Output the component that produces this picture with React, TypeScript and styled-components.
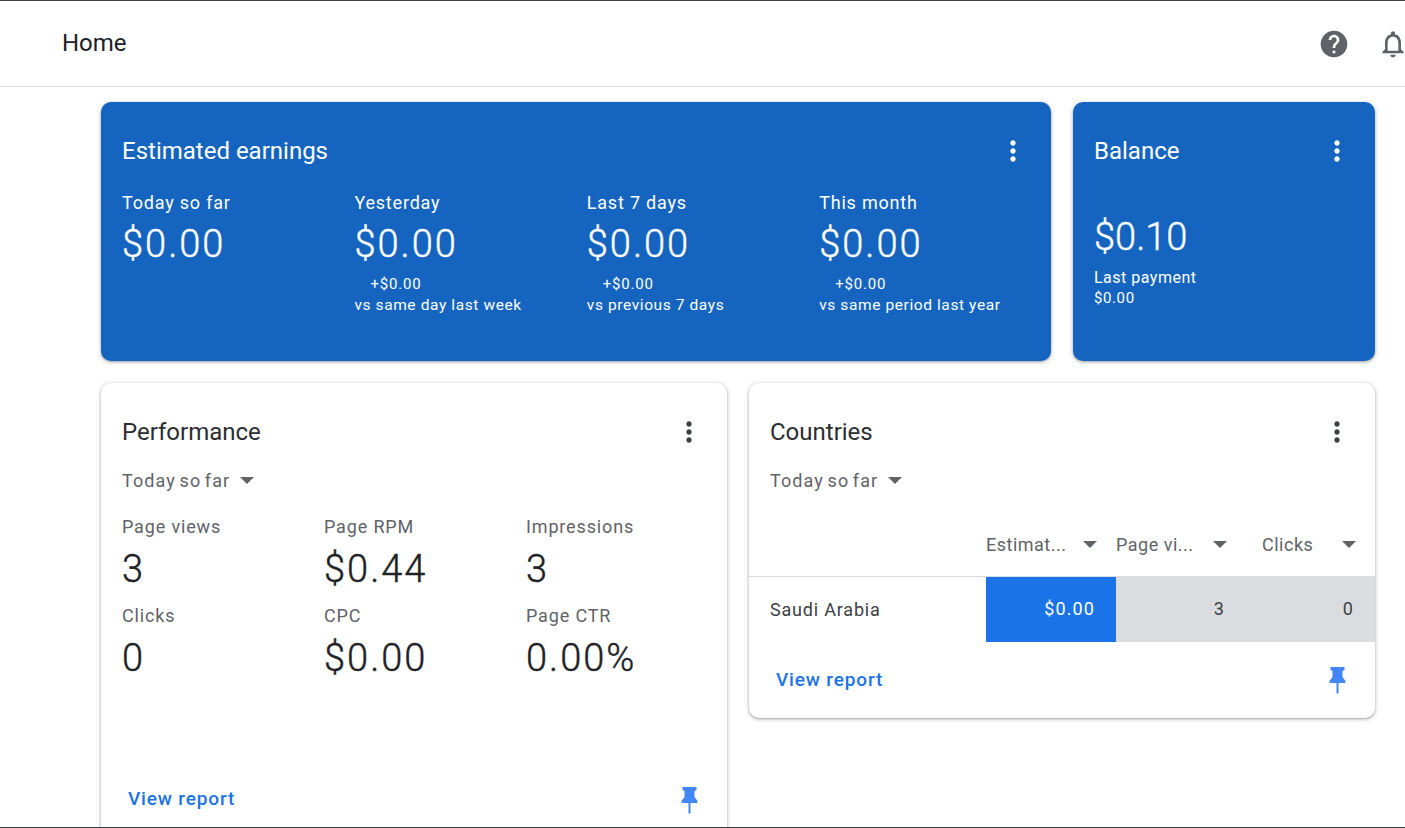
import React from "react";
import styled, { createGlobalStyle } from "styled-components";

const GlobalStyle = createGlobalStyle`
  html, body {
    margin: 0;
    padding: 0;
    background: #fff;
    font-family: Roboto, "Liberation Sans", sans-serif;
  }
`;

const Page = styled.div`
  height: 828px;
  overflow: hidden;
  box-sizing: border-box;
  border-top: 1px solid #3c4043;
  border-bottom: 1px solid #3c4043;
  display: flex;
  flex-direction: column;
`;

const Header = styled.header`
  height: 86px;
  flex-shrink: 0;
  box-sizing: border-box;
  border-bottom: 1px solid #dadce0;
  display: flex;
  align-items: center;
  justify-content: space-between;
  padding: 1px 0 0 62px;
  overflow: hidden;
`;

const PageTitle = styled.h1`
  margin: -2px 0 0;
  font-size: 24px;
  font-weight: 400;
  color: #202124;
`;

const HeaderIcons = styled.div`
  display: flex;
  align-items: center;
  gap: 27px;
  margin-right: -4px;
`;

const Main = styled.main`
  flex: 1;
  min-height: 0;
  padding: 15px 30px 0 101px;
  display: flex;
  flex-direction: column;
  gap: 22px;
`;

const TopRow = styled.div`
  display: grid;
  grid-template-columns: 950px 302px;
  gap: 22px;
`;

const BottomRow = styled.div`
  display: grid;
  grid-template-columns: 626px 626px;
  gap: 22px;
  align-items: start;
`;

const Card = styled.section<{ $blue?: boolean; $height: number }>`
  box-sizing: border-box;
  height: ${(p) => p.$height}px;
  border-radius: 10px;
  background: ${(p) => (p.$blue ? "#1565c0" : "#fff")};
  color: ${(p) => (p.$blue ? "#fff" : "#2b2d30")};
  box-shadow: 0 1px 2px rgba(60, 64, 67, 0.35), 0 1px 4px 1px rgba(60, 64, 67, 0.18);
  padding: 0 21px;
  position: relative;
  display: flex;
  flex-direction: column;
`;

const CardHead = styled.div`
  height: 98px;
  flex-shrink: 0;
  display: flex;
  align-items: center;
  justify-content: space-between;
`;

const CardTitle = styled.h2`
  margin: 0;
  font-size: 24px;
  font-weight: 400;
  color: inherit;
`;

const MoreButton = styled.span<{ $light?: boolean }>`
  width: 32px;
  height: 32px;
  margin-right: 1px;
  color: ${(p) => (p.$light ? "#fff" : "#3c4043")};
  display: flex;
`;

const EarningsGrid = styled.div`
  display: grid;
  grid-template-columns: repeat(4, 232.4px);
`;

const EarningLabel = styled.div`
  font-size: 18px;
  line-height: 22px;
  letter-spacing: 0.8px;
  margin-top: -8px;
`;

const EarningValue = styled.div`
  font-size: 38px;
  line-height: 46px;
  font-weight: 300;
  letter-spacing: 2px;
  -webkit-text-stroke: 0.4px currentColor;
  margin-top: 7px;
`;

const Delta = styled.div`
  font-size: 15px;
  line-height: 20px;
  letter-spacing: 0.8px;
  padding-left: 16px;
  margin-top: 7px;
`;

const Compare = styled.div`
  font-size: 15.5px;
  line-height: 20px;
  letter-spacing: 0.6px;
  margin-top: 1px;
`;

const BalanceValue = styled.div`
  font-size: 38px;
  line-height: 46px;
  font-weight: 300;
  -webkit-text-stroke: 0.4px currentColor;
  margin-top: 14px;
`;

const BalanceLabel = styled.div`
  font-size: 16px;
  line-height: 20px;
  letter-spacing: 0.5px;
  margin-top: 8px;
`;

const BalanceAmount = styled.div`
  font-size: 15px;
  line-height: 21px;
  letter-spacing: 0.6px;
`;

const RangePicker = styled.div`
  display: flex;
  align-items: center;
  gap: 10px;
  height: 24px;
  margin-top: -13px;
  font-size: 18px;
  letter-spacing: 1.1px;
  word-spacing: -2px;
  color: #5f6368;
`;

const Caret = styled.span`
  width: 0;
  height: 0;
  border-left: 7.5px solid transparent;
  border-right: 7.5px solid transparent;
  border-top: 7.5px solid #5f6368;
`;

const MetricsGrid = styled.div`
  display: grid;
  grid-template-columns: repeat(3, 202px);
  row-gap: 11.5px;
  margin-top: 23px;
`;

const MetricLabel = styled.div`
  font-size: 18px;
  line-height: 24px;
  letter-spacing: 0.85px;
  color: #5f6368;
`;

const MetricValue = styled.div`
  font-size: 38px;
  line-height: 46px;
  font-weight: 300;
  letter-spacing: 2px;
  -webkit-text-stroke: 0.4px currentColor;
  margin-top: 7px;
  color: #202124;
`;

const CardFoot = styled.div<{ $offset: number }>`
  margin-top: ${(p) => p.$offset}px;
  padding: 0 8px 0 6px;
  display: flex;
  align-items: center;
  justify-content: space-between;
`;

const ViewReport = styled.a`
  font-size: 19px;
  font-weight: 500;
  color: #1a73e8;
  text-decoration: none;
  letter-spacing: 0.85px;
`;

const PinSvg = styled.svg`
  margin-top: 3px;
`;

const TableHead = styled.div`
  display: grid;
  grid-template-columns: 237px 130px 130px 129px;
  margin: 18px -21px 0;
  height: 67px;
  padding-top: 3px;
  box-sizing: border-box;
  border-bottom: 1px solid #dadce0;
  align-items: center;
`;

const HeadCell = styled.div<{ $indent?: number }>`
  display: flex;
  align-items: center;
  justify-content: space-between;
  padding: 0 19px 0 ${(p) => p.$indent ?? 0}px;
  font-size: 18px;
  letter-spacing: 0.5px;
  color: #5f6368;
`;

const TableRow = styled.div`
  display: grid;
  grid-template-columns: 237px 130px 130px 129px;
  margin: 0 -21px;
  height: 65px;
`;

const CountryCell = styled.div`
  display: flex;
  align-items: center;
  padding: 0 0 1px 21px;
  font-size: 18px;
  letter-spacing: 0.8px;
  color: #3c4043;
`;

const NumberCell = styled.div<{ $primary?: boolean }>`
  display: flex;
  align-items: center;
  justify-content: flex-end;
  padding: 0 21px 3px 0;
  font-size: 18px;
  letter-spacing: 1.1px;
  background: ${(p) => (p.$primary ? "#1a73e8" : "#dadce0")};
  color: ${(p) => (p.$primary ? "#fff" : "#3c4043")};
`;

const MoreIcon = () => (
  <svg width="32" height="32" viewBox="0 0 24 24" fill="currentColor">
    <path d="M12 8c1.1 0 2-.9 2-2s-.9-2-2-2-2 .9-2 2 .9 2 2 2zm0 2c-1.1 0-2 .9-2 2s.9 2 2 2 2-.9 2-2-.9-2-2-2zm0 6c-1.1 0-2 .9-2 2s.9 2 2 2 2-.9 2-2-.9-2-2-2z" />
  </svg>
);

const PinIcon = () => (
  <PinSvg width="17" height="27" viewBox="0 0 17 27" fill="#4285f4">
    <path d="M1.5 0h14v3l-2 1v6l3 4v2H9.5v10.5h-2V16H.5v-2l3-4V4l-2-1z" />
  </PinSvg>
);

const earnings = [
  { label: "Today so far", value: "$0.00" },
  { label: "Yesterday", value: "$0.00", delta: "+$0.00", compare: "vs same day last week" },
  { label: "Last 7 days", value: "$0.00", delta: "+$0.00", compare: "vs previous 7 days" },
  { label: "This month", value: "$0.00", delta: "+$0.00", compare: "vs same period last year" },
];

const metrics = [
  { label: "Page views", value: "3" },
  { label: "Page RPM", value: "$0.44" },
  { label: "Impressions", value: "3" },
  { label: "Clicks", value: "0" },
  { label: "CPC", value: "$0.00" },
  { label: "Page CTR", value: "0.00%" },
];

export default function App() {
  return (
    <Page>
      <GlobalStyle />
      <Header>
        <PageTitle>Home</PageTitle>
        <HeaderIcons>
          <svg width="32" height="32" viewBox="0 0 24 24" fill="#5f6368">
            <path d="M12 2C6.48 2 2 6.48 2 12s4.48 10 10 10 10-4.48 10-10S17.52 2 12 2zm1 17h-2v-2h2v2zm2.07-7.75l-.9.92C13.45 12.9 13 13.5 13 15h-2v-.5c0-1.1.45-2.1 1.17-2.83l1.24-1.26c.37-.36.59-.86.59-1.41 0-1.1-.9-2-2-2s-2 .9-2 2H8c0-2.21 1.79-4 4-4s4 1.79 4 4c0 .88-.36 1.68-.93 2.25z" />
          </svg>
          <svg width="32" height="32" viewBox="0 0 24 24" fill="#5f6368">
            <path d="M12 22c1.1 0 2-.9 2-2h-4c0 1.1.9 2 2 2zm6-6v-5c0-3.07-1.63-5.64-4.5-6.32V4c0-.83-.67-1.5-1.5-1.5s-1.5.67-1.5 1.5v.68C7.64 5.36 6 7.92 6 11v5l-2 2v1h16v-1l-2-2zm-2 1H8v-6c0-2.48 1.51-4.5 4-4.5s4 2.02 4 4.5v6z" />
          </svg>
        </HeaderIcons>
      </Header>
      <Main>
        <TopRow>
          <Card $blue $height={259}>
            <CardHead>
              <CardTitle>Estimated earnings</CardTitle>
              <MoreButton $light><MoreIcon /></MoreButton>
            </CardHead>
            <EarningsGrid>
              {earnings.map((e) => (
                <div key={e.label}>
                  <EarningLabel>{e.label}</EarningLabel>
                  <EarningValue>{e.value}</EarningValue>
                  {e.delta && <Delta>{e.delta}</Delta>}
                  {e.compare && <Compare>{e.compare}</Compare>}
                </div>
              ))}
            </EarningsGrid>
          </Card>
          <Card $blue $height={259}>
            <CardHead>
              <CardTitle>Balance</CardTitle>
              <MoreButton $light><MoreIcon /></MoreButton>
            </CardHead>
            <BalanceValue>$0.10</BalanceValue>
            <BalanceLabel>Last payment</BalanceLabel>
            <BalanceAmount>$0.00</BalanceAmount>
          </Card>
        </TopRow>
        <BottomRow>
          <Card $height={500}>
            <CardHead>
              <CardTitle>Performance</CardTitle>
              <MoreButton><MoreIcon /></MoreButton>
            </CardHead>
            <RangePicker>Today so far <Caret /></RangePicker>
            <MetricsGrid>
              {metrics.map((m) => (
                <div key={m.label}>
                  <MetricLabel>{m.label}</MetricLabel>
                  <MetricValue>{m.value}</MetricValue>
                </div>
              ))}
            </MetricsGrid>
            <CardFoot $offset={103}>
              <ViewReport>View report</ViewReport>
              <PinIcon />
            </CardFoot>
          </Card>
          <Card $height={335}>
            <CardHead>
              <CardTitle>Countries</CardTitle>
              <MoreButton><MoreIcon /></MoreButton>
            </CardHead>
            <RangePicker>Today so far <Caret /></RangePicker>
            <TableHead>
              <div />
              <HeadCell>Estimat... <Caret /></HeadCell>
              <HeadCell>Page vi... <Caret /></HeadCell>
              <HeadCell $indent={16}>Clicks <Caret /></HeadCell>
            </TableHead>
            <TableRow>
              <CountryCell>Saudi Arabia</CountryCell>
              <NumberCell $primary>$0.00</NumberCell>
              <NumberCell>3</NumberCell>
              <NumberCell>0</NumberCell>
            </TableRow>
            <CardFoot $offset={22}>
              <ViewReport>View report</ViewReport>
              <PinIcon />
            </CardFoot>
          </Card>
        </BottomRow>
      </Main>
    </Page>
  );
}
